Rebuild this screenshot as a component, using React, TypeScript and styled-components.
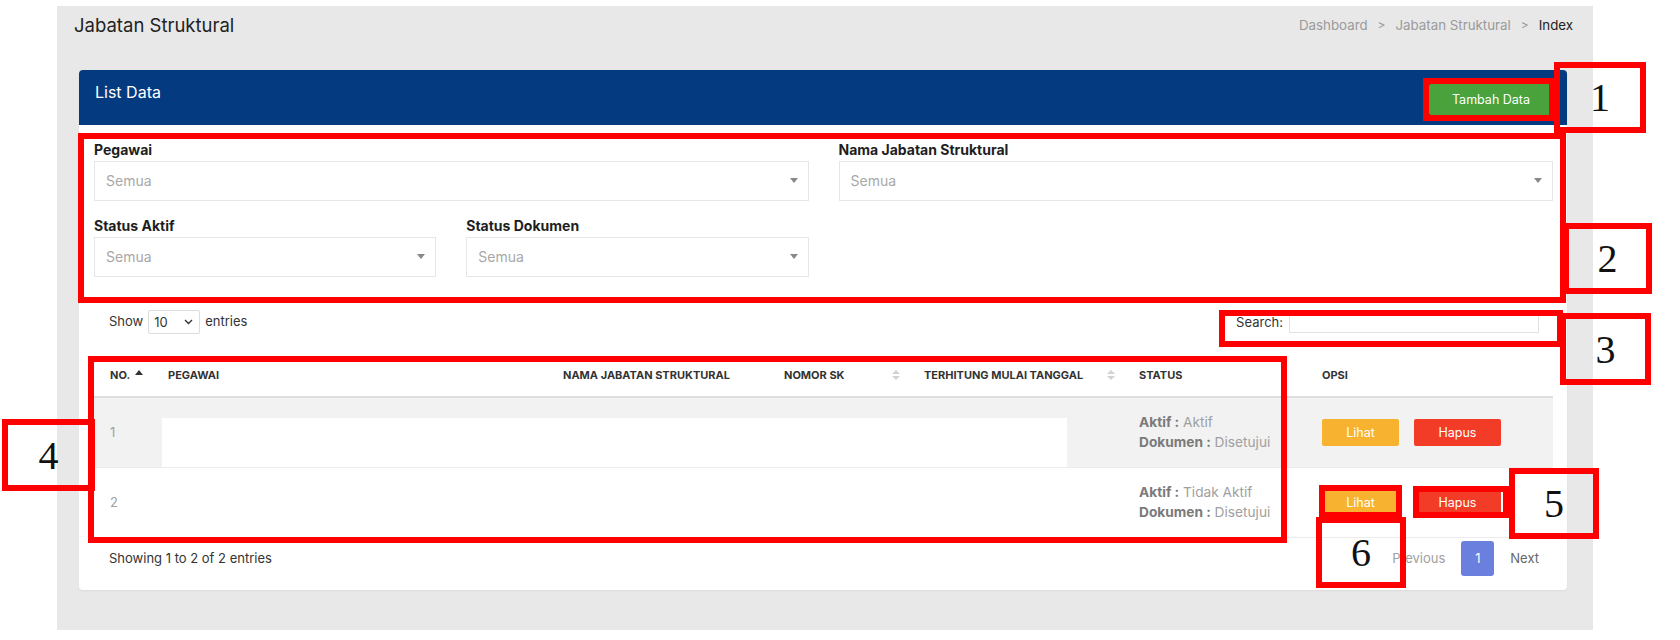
import React from "react";
import styled, { createGlobalStyle } from "styled-components";

const GlobalStyle = createGlobalStyle`
  html, body {
    margin: 0;
    padding: 0;
    background: #fff;
  }
  body {
    font-family: Inter, "Noto Sans", sans-serif;
    color: #333;
  }
  * {
    box-sizing: border-box;
  }
`;

const Page = styled.div`
  position: relative;
  width: 1680px;
  height: 640px;
  padding: 6px 0 0 57px;
  overflow: hidden;
`;

const Panel = styled.div`
  width: 1536px;
  height: 624px;
  background: #e8e8e8;
  display: flex;
  flex-direction: column;
`;

const PageHeader = styled.div`
  height: 64px;
  display: flex;
  justify-content: space-between;
  align-items: flex-start;
  padding: 8px 20px 0 17px;
`;

const PageTitle = styled.h1`
  margin: 0;
  font-size: 18.5px;
  font-weight: 400;
  line-height: 22px;
  color: #222;
`;

const Breadcrumb = styled.nav`
  display: flex;
  align-items: center;
  font-size: 13.3px;
  line-height: 22px;
`;

const Crumb = styled.span<{ $active?: boolean }>`
  color: ${(p) => (p.$active ? "#222" : "#9a9a9a")};
`;

const Sep = styled.span`
  color: #9a9a9a;
  font-size: 12px;
  margin: 0 10px;
`;

const Card = styled.section`
  margin: 0 26px 0 22px;
  height: 520px;
  background: #fff;
  border-radius: 4px;
  box-shadow: 0 1px 2px rgba(0, 0, 0, 0.06);
  overflow: hidden;
`;

const CardHeader = styled.header`
  height: 55px;
  background: #033a80;
  display: flex;
  justify-content: space-between;
  align-items: flex-start;
  padding: 11px 14px 0 16px;
`;

const CardTitle = styled.h2`
  margin: 0;
  font-size: 16px;
  font-weight: 400;
  line-height: 22px;
  color: #fff;
`;

const AddButton = styled.button`
  margin-top: 3px;
  width: 124px;
  height: 31px;
  border: 0;
  border-radius: 2px;
  background: #49a23b;
  color: #fff;
  font-family: inherit;
  font-size: 12.5px;
`;

const CardBody = styled.div`
  padding: 15px 14px 0 15px;
`;

const TableArea = styled.div`
  padding: 0 14px 0 15px;
`;

const FilterGrid = styled.div`
  display: grid;
  grid-template-columns: repeat(4, 1fr);
  column-gap: 30px;
`;

const FormGroup = styled.div<{ $span?: number }>`
  grid-column: span ${(p) => p.$span ?? 1};
  margin-bottom: 15px;
`;

const Label = styled.label`
  display: block;
  font-size: 14px;
  font-weight: 700;
  line-height: 20px;
  margin-bottom: 1px;
  color: #1e1e1e;
`;

const Select = styled.div`
  height: 40px;
  border: 1px solid #e6e6e6;
  display: flex;
  align-items: center;
  justify-content: space-between;
  padding: 0 10px 1px 11px;
  font-size: 14px;
  color: #a8a8a8;
`;

const Caret = styled.span`
  width: 0;
  height: 0;
  border-left: 4px solid transparent;
  border-right: 4px solid transparent;
  border-top: 5px solid #888;
`;

const Controls = styled.div`
  display: flex;
  justify-content: space-between;
  align-items: center;
  height: 28px;
  margin-top: 16px;
  padding: 0 28px 0 30px;
  font-size: 13px;
  color: #333;
`;

const LengthSelect = styled.span`
  display: inline-flex;
  align-items: center;
  justify-content: space-between;
  width: 52px;
  height: 24px;
  border: 1px solid #ddd;
  border-radius: 2px;
  padding: 0 6px 0 5px;
  margin: 0 5px;
  vertical-align: middle;
`;

const SearchBox = styled.label`
  display: flex;
  align-items: center;
`;

const SearchInput = styled.input`
  width: 250px;
  height: 21px;
  border: 1px solid #e2e2e2;
  margin: 0 0 0 6px;
  outline: none;
`;

const Table = styled.table`
  width: 100%;
  border-collapse: collapse;
  table-layout: fixed;
  margin-top: 17px;
`;

const Th = styled.th`
  height: 44px;
  text-align: left;
  padding: 0 8px 0 16px;
  font-size: 11px;
  font-weight: 700;
  color: #333;
  border-bottom: 2px solid #dedede;
  white-space: nowrap;
`;

const HeadInner = styled.div<{ $spread?: boolean }>`
  display: flex;
  align-items: center;
  justify-content: ${(p) => (p.$spread ? "space-between" : "flex-start")};
  gap: 5px;
`;

const SortAsc = styled.span`
  width: 0;
  height: 0;
  border-left: 4px solid transparent;
  border-right: 4px solid transparent;
  border-bottom: 5px solid #333;
  margin-top: -4px;
`;

const SortBoth = styled.span`
  display: flex;
  flex-direction: column;
  gap: 2px;
  &::before,
  &::after {
    content: "";
    width: 0;
    height: 0;
    border-left: 4px solid transparent;
    border-right: 4px solid transparent;
  }
  &::before {
    border-bottom: 4px solid #d2d2d2;
  }
  &::after {
    border-top: 4px solid #d2d2d2;
  }
`;

const Row = styled.tr<{ $striped?: boolean }>`
  background: ${(p) => (p.$striped ? "#f2f2f2" : "#fff")};
  border-bottom: 1px solid #ececec;
`;

const Td = styled.td<{ $flush?: boolean }>`
  height: 70px;
  padding: ${(p) => (p.$flush ? "0" : "0 16px")};
  vertical-align: ${(p) => (p.$flush ? "bottom" : "middle")};
  font-size: 13px;
  color: #a0a0a0;
`;

const Redaction = styled.div`
  height: 49px;
  margin: 0 56px 0 10px;
  background: #fff;
`;

const StatusLine = styled.div`
  line-height: 20px;
  font-size: 13.7px;
  color: #a0a0a0;
  white-space: nowrap;
  b {
    color: #7a7a7a;
    font-weight: 700;
  }
`;

const Actions = styled.div`
  display: flex;
  gap: 15px;
`;

const ActionButton = styled.button<{ $variant: "view" | "delete" }>`
  width: ${(p) => (p.$variant === "view" ? "77px" : "87px")};
  height: 27px;
  border: 0;
  border-radius: 2px;
  background: ${(p) => (p.$variant === "view" ? "#f7b32f" : "#f23c27")};
  color: #fff;
  font-family: inherit;
  font-size: 12.5px;
`;

const Footer = styled.div`
  display: flex;
  justify-content: space-between;
  align-items: center;
  padding: 3px 28px 0 30px;
  font-size: 13px;
  color: #333;
`;

const Pagination = styled.div`
  display: flex;
  align-items: center;
  gap: 16px;
`;

const PageLink = styled.span<{ $muted?: boolean }>`
  color: ${(p) => (p.$muted ? "#a0a0a0" : "#666")};
`;

const PageNumber = styled.span`
  width: 33px;
  height: 35px;
  border-radius: 3px;
  background: #6b7fdf;
  color: #fff;
  display: flex;
  align-items: center;
  justify-content: center;
`;

const Mark = styled.div<{ $x: number; $y: number; $w: number; $h: number }>`
  position: absolute;
  left: ${(p) => p.$x}px;
  top: ${(p) => p.$y}px;
  width: ${(p) => p.$w}px;
  height: ${(p) => p.$h}px;
  border: 6px solid #ff0000;
  display: flex;
  align-items: center;
  justify-content: center;
  font-family: "Liberation Serif", "DejaVu Serif", serif;
  font-size: 40px;
  color: #111;
  pointer-events: none;
`;

const marks = [
  { x: 1423, y: 78, w: 132, h: 43, n: "" },
  { x: 1554, y: 62, w: 92, h: 71, n: "1" },
  { x: 78, y: 133, w: 1488, h: 170, n: "" },
  { x: 1563, y: 223, w: 89, h: 71, n: "2" },
  { x: 1219, y: 310, w: 344, h: 37, n: "" },
  { x: 1560, y: 313, w: 91, h: 72, n: "3" },
  { x: 88, y: 356, w: 1199, h: 187, n: "" },
  { x: 2, y: 419, w: 93, h: 72, n: "4" },
  { x: 1319, y: 485, w: 83, h: 33, n: "" },
  { x: 1413, y: 486, w: 96, h: 32, n: "" },
  { x: 1509, y: 468, w: 90, h: 71, n: "5" },
  { x: 1316, y: 517, w: 90, h: 71, n: "6" },
];

const columns = [58, 395, 221, 140, 215, 183, 247];

const rows = [
  { no: 1, aktif: "Aktif", dokumen: "Disetujui" },
  { no: 2, aktif: "Tidak Aktif", dokumen: "Disetujui" },
];

const Filter = ({ label, span }: { label: string; span: number }) => (
  <FormGroup $span={span}>
    <Label>{label}</Label>
    <Select>
      <span>Semua</span>
      <Caret />
    </Select>
  </FormGroup>
);

export default function App() {
  return (
    <>
      <GlobalStyle />
      <Page>
        <Panel>
          <PageHeader>
            <PageTitle>Jabatan Struktural</PageTitle>
            <Breadcrumb>
              <Crumb>Dashboard</Crumb>
              <Sep>&gt;</Sep>
              <Crumb>Jabatan Struktural</Crumb>
              <Sep>&gt;</Sep>
              <Crumb $active>Index</Crumb>
            </Breadcrumb>
          </PageHeader>
          <Card>
            <CardHeader>
              <CardTitle>List Data</CardTitle>
              <AddButton>Tambah Data</AddButton>
            </CardHeader>
            <CardBody>
              <FilterGrid>
                <Filter label="Pegawai" span={2} />
                <Filter label="Nama Jabatan Struktural" span={2} />
                <Filter label="Status Aktif" span={1} />
                <Filter label="Status Dokumen" span={1} />
              </FilterGrid>
            </CardBody>
            <Controls>
              <span>
                Show
                <LengthSelect>
                  <span>10</span>
                  <svg width="9" height="6" viewBox="0 0 9 6">
                    <path d="M1 1l3.5 3.5L8 1" fill="none" stroke="#333" strokeWidth="1.4" />
                  </svg>
                </LengthSelect>
                entries
              </span>
              <SearchBox>
                Search:
                <SearchInput />
              </SearchBox>
            </Controls>
            <TableArea>
              <Table>
                <colgroup>
                  {columns.map((w, i) => (
                    <col key={i} style={{ width: w }} />
                  ))}
                </colgroup>
                <thead>
                  <tr>
                    <Th>
                      <HeadInner>
                        NO. <SortAsc />
                      </HeadInner>
                    </Th>
                    <Th>PEGAWAI</Th>
                    <Th>NAMA JABATAN STRUKTURAL</Th>
                    <Th>
                      <HeadInner $spread>
                        NOMOR SK <SortBoth />
                      </HeadInner>
                    </Th>
                    <Th>
                      <HeadInner $spread>
                        TERHITUNG MULAI TANGGAL <SortBoth />
                      </HeadInner>
                    </Th>
                    <Th>STATUS</Th>
                    <Th>OPSI</Th>
                  </tr>
                </thead>
                <tbody>
                  {rows.map((r) => (
                    <Row key={r.no} $striped={r.no % 2 === 1}>
                      <Td>{r.no}</Td>
                      <Td $flush colSpan={4}>
                        {r.no === 1 && <Redaction />}
                      </Td>
                      <Td>
                        <StatusLine>
                          <b>Aktif :</b> {r.aktif}
                        </StatusLine>
                        <StatusLine>
                          <b>Dokumen :</b> {r.dokumen}
                        </StatusLine>
                      </Td>
                      <Td>
                        <Actions>
                          <ActionButton $variant="view">Lihat</ActionButton>
                          <ActionButton $variant="delete">Hapus</ActionButton>
                        </Actions>
                      </Td>
                    </Row>
                  ))}
                </tbody>
              </Table>
            </TableArea>
            <Footer>
              <span>Showing 1 to 2 of 2 entries</span>
              <Pagination>
                <PageLink $muted>Previous</PageLink>
                <PageNumber>1</PageNumber>
                <PageLink>Next</PageLink>
              </Pagination>
            </Footer>
          </Card>
        </Panel>
        {marks.map((m, i) => (
          <Mark key={i} $x={m.x} $y={m.y} $w={m.w} $h={m.h}>
            {m.n}
          </Mark>
        ))}
      </Page>
    </>
  );
}
